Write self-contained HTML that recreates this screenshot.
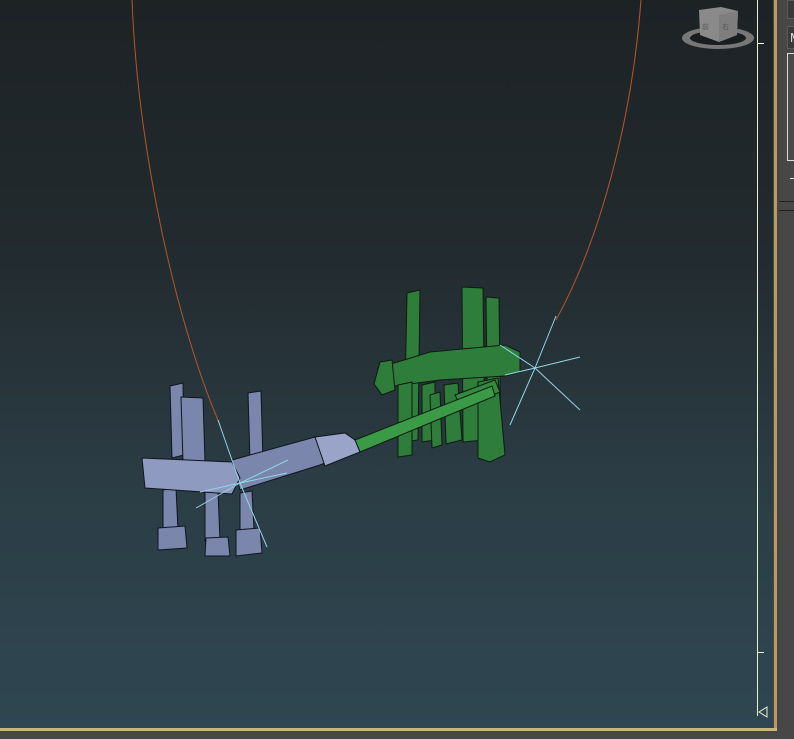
<!DOCTYPE html>
<html><head><meta charset="utf-8"><style>
html,body{margin:0;padding:0;width:794px;height:739px;overflow:hidden;background:#474747;font-family:"Liberation Sans",sans-serif}
#vp{position:absolute;left:0;top:0;width:773px;height:728px;background:linear-gradient(#1d2225 0%,#222b2f 35%,#2b3c44 65%,#2f4752 100%)}
#bt{position:absolute;left:0;top:728px;width:777px;height:3px;background:#c9b47a}
#br{position:absolute;left:774px;top:0;width:3px;height:731px;background:#b89a5c}
#vl{position:absolute;left:757px;top:0;width:1px;height:716px;background:#e8f0d0}
.p{position:absolute;background:#3a3a3a;border:1px solid #5a5a5a}
</style></head><body>
<div id="vp"></div>
<div id="vl"></div>
<div style="position:absolute;left:758px;top:43px;width:6px;height:1px;background:#fff"></div>
<div style="position:absolute;left:758px;top:652px;width:6px;height:1px;background:#e8f0d0"></div>
<div id="br"></div><div id="bt"></div>
<div class="p" style="left:787px;top:0;width:8px;height:17px"></div>
<div class="p" style="left:787px;top:26px;width:8px;height:21px;color:#ddd;font-size:13px;line-height:21px;padding-left:2px">M</div>
<div style="position:absolute;left:787px;top:53px;width:7px;height:106px;border:1px solid #ddd;border-right:none;background:#4a4a4a"></div>
<div style="position:absolute;left:790px;top:178px;width:4px;height:1px;background:#ddd"></div>
<div style="position:absolute;left:779px;top:201px;width:15px;height:1px;background:#222"></div>
<div style="position:absolute;left:779px;top:210px;width:15px;height:1px;background:#222"></div>
<svg width="794" height="739" style="position:absolute;left:0;top:0">
<ellipse cx="718" cy="38" rx="36" ry="11" fill="#777"/>
<ellipse cx="718" cy="38" rx="28" ry="7" fill="#1a1d1f"/>
<polygon points="699,10 721,7 738,11 737,35 719,42 700,35" fill="#8a8a8a"/>
<polygon points="719,15 738,11 737,35 719,42" fill="#7e7e7e"/>
<text x="702" y="29" font-size="7" fill="#555">前</text><text x="722" y="29" font-size="7" fill="#555">右</text>
<polygon points="759,712 767,707 767,717" fill="none" stroke="#e8f0d0" stroke-width="1"/>
<path d="M132,0 C138,150 175,320 220,425" fill="none" stroke="#b5562a" stroke-width="1"/>
<path d="M641,0 C632,120 600,240 556,320" fill="none" stroke="#b5562a" stroke-width="1"/>
<!-- green object -->
<g fill="#2f7d3a" stroke="#0c1a10" stroke-width="1">
<polygon points="407,293 420,290 418,440 404,442"/>
<polygon points="462,287 483,288 485,440 463,442"/>
<polygon points="486,297 499,298 501,455 488,458"/>
<polygon points="378,368 430,352 505,345 520,352 520,372 505,376 440,380 395,386"/>
<polygon points="380,362 392,360 395,390 382,395 374,384"/>
<polygon points="398,385 412,382 412,455 398,457"/>
<polygon points="422,385 435,382 435,440 422,442"/>
<polygon points="444,385 458,383 462,440 446,444"/>
<polygon points="478,382 498,378 505,455 490,462 478,458"/>
<polygon points="430,395 440,392 442,445 432,448"/>
</g>
<polygon points="455,395 495,380 500,392 462,408" fill="#358a40" stroke="#0c1a10"/>
<polygon points="355,440 492,386 495,396 360,452" fill="#3a9a45" stroke="#0c1a10"/>
<!-- blue object -->
<g fill="#7a86ab" stroke="#101420" stroke-width="1">
<polygon points="170,386 183,383 184,455 172,458"/>
<polygon points="181,397 203,398 205,462 183,462"/>
<polygon points="248,393 261,391 263,462 250,462"/>
<polygon points="163,490 176,488 178,530 163,532"/>
<polygon points="158,528 185,526 187,548 158,550"/>
<polygon points="205,492 218,492 220,540 205,541"/>
<polygon points="206,538 228,537 230,556 205,556"/>
<polygon points="240,493 252,491 254,530 240,532"/>
<polygon points="236,530 260,528 262,553 236,556"/>
<polygon points="232,460 315,437 345,433 352,452 320,465 240,490"/>
</g>
<polygon points="142,458 232,462 240,478 232,494 145,488" fill="#8f9ac0" stroke="#101420"/>
<polygon points="315,437 345,433 355,440 360,452 325,466" fill="#9aa4c8" stroke="#101420"/>
<g stroke="#8fd6e6" stroke-width="1">
<line x1="535" y1="368" x2="580" y2="357"/><line x1="535" y1="368" x2="580" y2="410"/>
<line x1="535" y1="368" x2="510" y2="425"/><line x1="535" y1="368" x2="500" y2="345"/>
<line x1="535" y1="368" x2="556" y2="316"/><line x1="535" y1="368" x2="505" y2="375"/>
<line x1="240" y1="483" x2="288" y2="460"/><line x1="240" y1="483" x2="267" y2="547"/>
<line x1="240" y1="483" x2="196" y2="508"/><line x1="240" y1="483" x2="218" y2="420"/>
<line x1="240" y1="483" x2="287" y2="473"/><line x1="240" y1="483" x2="200" y2="492"/>
</g>
</svg>
</body></html>
